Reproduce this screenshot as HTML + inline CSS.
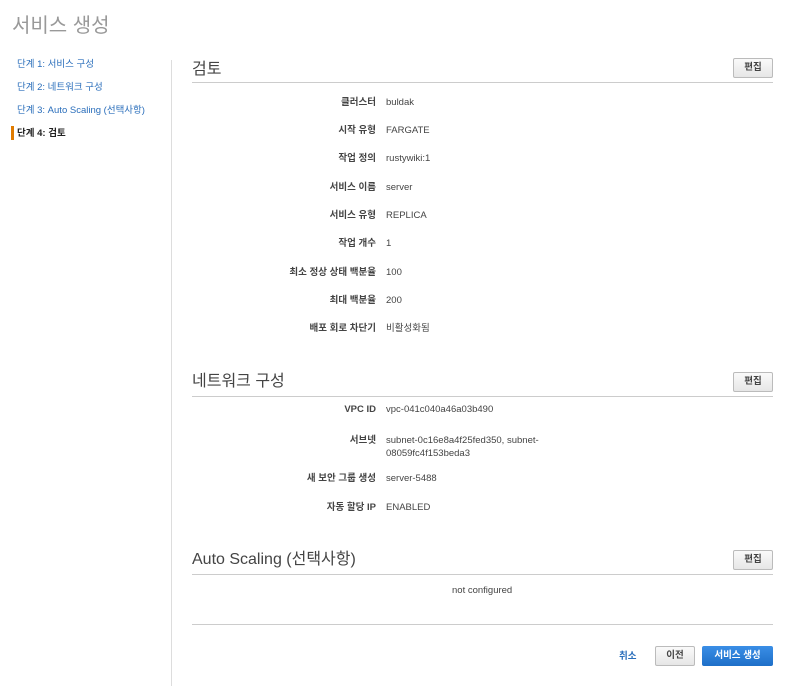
<!DOCTYPE html>
<html><head><meta charset="utf-8"><style>
body{margin:0;width:800px;height:686px;background:#fff;font-family:"Liberation Sans","Noto Sans CJK KR",sans-serif;font-size:9.5px;color:#333;position:relative;overflow:hidden}
.a{position:absolute;white-space:nowrap;line-height:14px}
.title{left:12px;top:13px;font-size:20px;line-height:26px;color:#999}
.nav{left:17px;font-size:9.5px;color:#2a6ebb}
.div{left:171px;top:60px;width:1px;height:626px;background:#ddd}
.h{left:192px;font-size:16px;line-height:20px;color:#444}
.line{left:192px;width:581px;height:1px;background:#ccc}
.btn{border:1px solid #bbb;border-radius:2px;background:linear-gradient(#fafafa,#e6e6e6);font-weight:bold;font-size:9.5px;color:#444;text-align:center;box-sizing:border-box}
.lab{right:424px;font-weight:bold;color:#444;text-align:right}
.val{left:386px;color:#444}
</style></head><body>
<div class="a title">서비스 생성</div>
<div class="a nav" style="top:58px">단계 1: 서비스 구성</div>
<div class="a nav" style="top:81px">단계 2: 네트워크 구성</div>
<div class="a nav" style="top:104px">단계 3: Auto Scaling (선택사항)</div>
<div class="a" style="left:11px;top:126px;width:3px;height:14px;background:#e07b00"></div>
<div class="a" style="left:17px;top:127px;font-weight:bold;color:#222">단계 4: 검토</div>
<div class="a div"></div>

<div class="a h" style="top:60px">검토</div>
<div class="a line" style="top:82px"></div>
<div class="a btn" style="left:733px;top:58px;width:40px;height:20px;line-height:18px">편집</div>
<div class="a lab" style="top:96px">클러스터</div><div class="a val" style="top:96px">buldak</div>
<div class="a lab" style="top:124px">시작 유형</div><div class="a val" style="top:124px">FARGATE</div>
<div class="a lab" style="top:152px">작업 정의</div><div class="a val" style="top:152px">rustywiki:1</div>
<div class="a lab" style="top:181px">서비스 이름</div><div class="a val" style="top:181px">server</div>
<div class="a lab" style="top:209px">서비스 유형</div><div class="a val" style="top:209px">REPLICA</div>
<div class="a lab" style="top:237px">작업 개수</div><div class="a val" style="top:237px">1</div>
<div class="a lab" style="top:266px">최소 정상 상태 백분율</div><div class="a val" style="top:266px">100</div>
<div class="a lab" style="top:294px">최대 백분율</div><div class="a val" style="top:294px">200</div>
<div class="a lab" style="top:322px">배포 회로 차단기</div><div class="a val" style="top:322px">비활성화됨</div>

<div class="a h" style="top:372px">네트워크 구성</div>
<div class="a line" style="top:396px"></div>
<div class="a btn" style="left:733px;top:372px;width:40px;height:20px;line-height:18px">편집</div>
<div class="a lab" style="top:403px">VPC ID</div><div class="a val" style="top:403px">vpc-041c040a46a03b490</div>
<div class="a lab" style="top:434px">서브넷</div><div class="a val" style="top:434px;line-height:13px">subnet-0c16e8a4f25fed350, subnet-<br>08059fc4f153beda3</div>
<div class="a lab" style="top:472px">새 보안 그룹 생성</div><div class="a val" style="top:472px">server-5488</div>
<div class="a lab" style="top:501px">자동 할당 IP</div><div class="a val" style="top:501px">ENABLED</div>

<div class="a h" style="top:550px">Auto Scaling (선택사항)</div>
<div class="a line" style="top:574px"></div>
<div class="a btn" style="left:733px;top:550px;width:40px;height:20px;line-height:18px">편집</div>
<div class="a" style="left:452px;top:584px;color:#444">not configured</div>
<div class="a line" style="top:624px"></div>

<div class="a" style="left:619px;top:650px;color:#2a6ebb;font-weight:bold">취소</div>
<div class="a btn" style="left:655px;top:646px;width:40px;height:20px;line-height:18px">이전</div>
<div class="a" style="left:702px;top:646px;width:71px;height:20px;line-height:20px;border-radius:2px;background:linear-gradient(#3a8ee6,#1e6fc8);color:#fff;font-weight:bold;text-align:center">서비스 생성</div>
</body></html>
